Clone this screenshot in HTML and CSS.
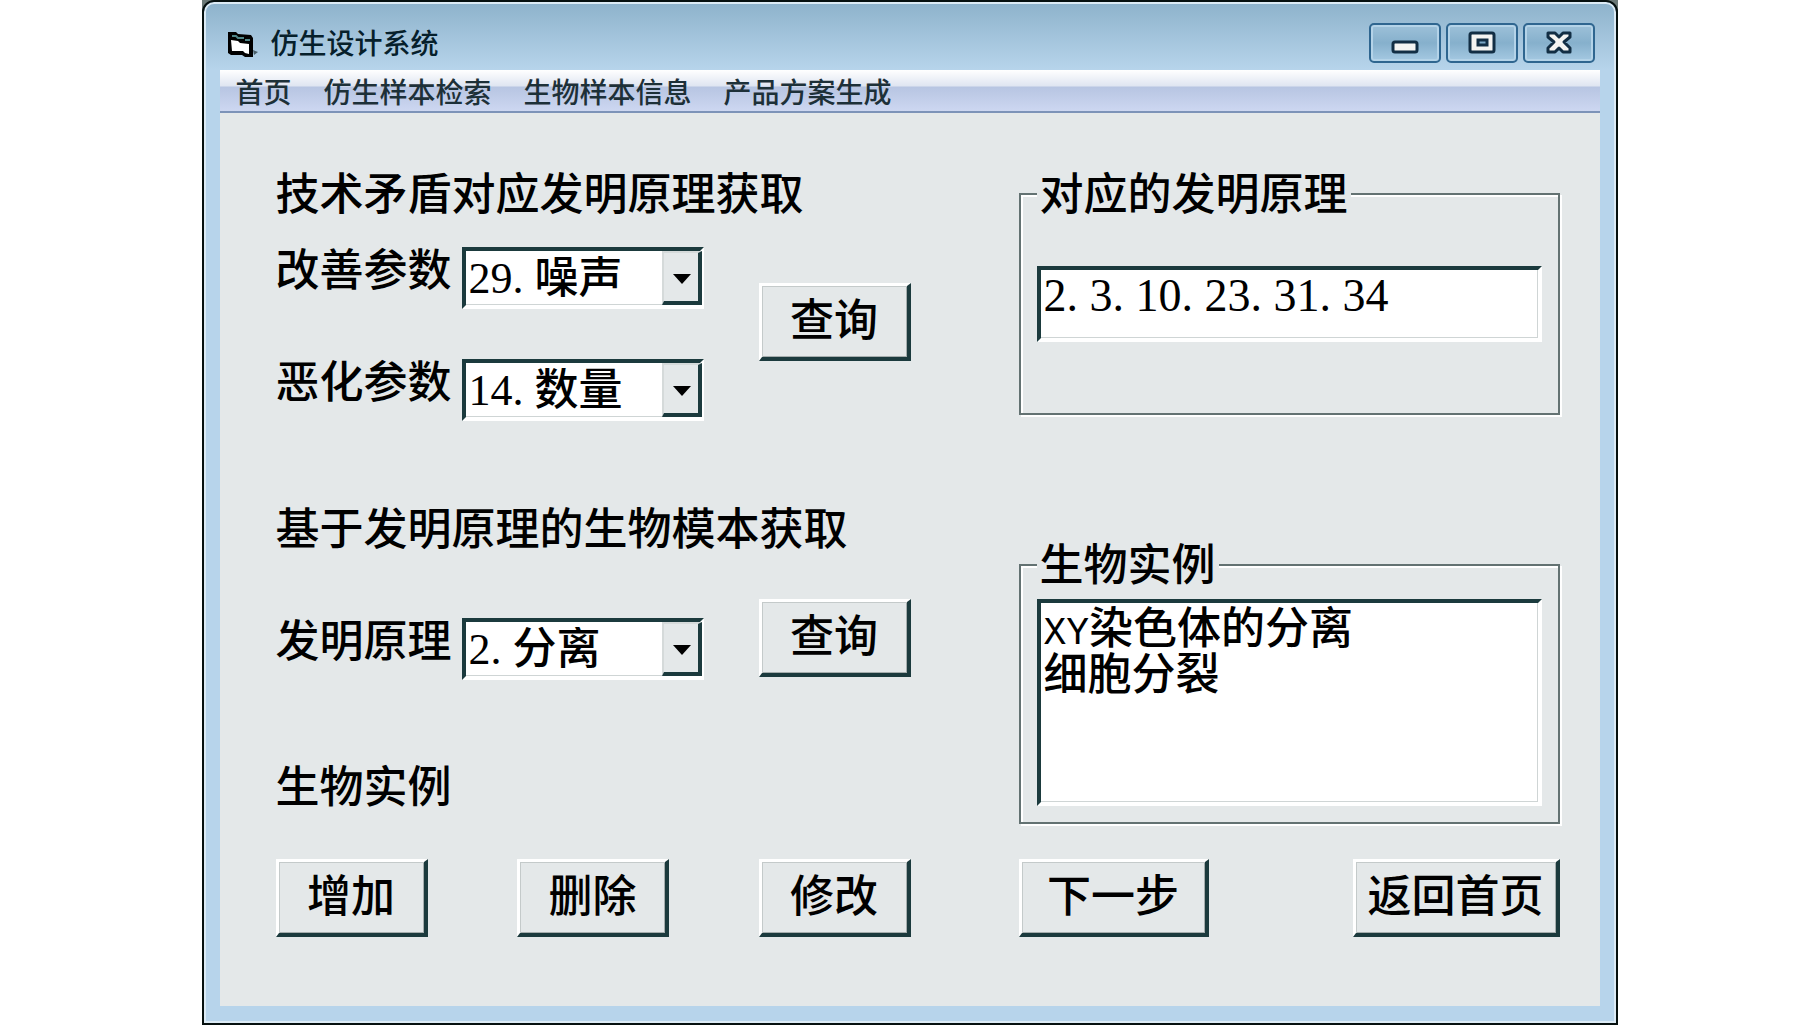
FILE: index.html
```html
<!DOCTYPE html>
<html lang="zh-CN">
<head>
    <meta charset="UTF-8">
    <meta name="viewport" content="width=device-width, initial-scale=1.0">
    <title>仿生设计系统</title>
    <link rel="stylesheet" href="styles.css">
</head>
<body>
    <div class="desktop">
        <div class="window">
            <header class="title-bar">
                <svg class="app-icon" width="32" height="30" viewBox="0 0 32 30">
                    <path d="M1 2 L9 2 L11 4 L24 5 L26 8 L26 27 L18 27 L15 25 L4 25 L1 23 Z" fill="#000"/>
                    <path d="M4 10 L11 11 L13 13 L22 14 L22 24 L18 23 L16 21 L5 21 Z" fill="#fff"/>
                    <path d="M5 6 L9 6 L11 8 L17 8 M18 10 L23 10" stroke="#4f8587" stroke-width="2" fill="none"/>
                    <path d="M26 20 L31 22 L27 25 Z" fill="#4a5f69"/>
                </svg>
                <h1 class="title">仿生设计系统</h1>
                <div class="window-buttons">
                    <button type="button" class="window-button" aria-label="最小化">
                        <svg width="28" height="24" viewBox="0 0 28 24">
                            <rect x="2" y="11" width="24" height="10" rx="2" fill="#f4f4f2" stroke="#122e44" stroke-width="3"/>
                        </svg>
                    </button>
                    <button type="button" class="window-button" aria-label="最大化">
                        <svg width="28" height="24" viewBox="0 0 28 24">
                            <rect x="2" y="2" width="24" height="19" rx="2" fill="#f4f4f2" stroke="#122e44" stroke-width="3"/>
                            <rect x="10" y="9" width="9" height="5" fill="#7ba7c6" stroke="#122e44" stroke-width="3"/>
                        </svg>
                    </button>
                    <button type="button" class="window-button" aria-label="关闭">
                        <svg width="28" height="24" viewBox="0 0 28 24">
                            <path d="M3 2 H10 L14 6 L18 2 H25 V6 L19 11 L25 17 V21 H18 L14 17 L10 21 H3 V17 L9 11 L3 6 Z" fill="#f4f4f2" stroke="#122e44" stroke-width="3" stroke-linejoin="round"/>
                        </svg>
                    </button>
                </div>
            </header>

            <nav class="menu">
                <a href="#">首页</a>
                <a href="#">仿生样本检索</a>
                <a href="#">生物样本信息</a>
                <a href="#">产品方案生成</a>
            </nav>

            <main class="form">
                <div class="left">
                    <h2>技术矛盾对应发明原理获取</h2>
                    <div class="query">
                        <div class="params">
                            <div class="param">
                                <label for="improve">改善参数</label>
                                <div class="combo">
                                    <select id="improve"><option>29. 噪声</option></select>
                                </div>
                            </div>
                            <div class="param">
                                <label for="worsen">恶化参数</label>
                                <div class="combo">
                                    <select id="worsen"><option>14. 数量</option></select>
                                </div>
                            </div>
                        </div>
                        <button type="button" class="button query-button">查询</button>
                    </div>

                    <h2 class="second">基于发明原理的生物模本获取</h2>
                    <div class="query second-query">
                        <div class="param">
                            <label for="principle">发明原理</label>
                            <div class="combo">
                                <select id="principle"><option>2. 分离</option></select>
                            </div>
                        </div>
                        <button type="button" class="button">查询</button>
                    </div>

                    <h2 class="examples">生物实例</h2>
                </div>

                <div class="right">
                    <fieldset class="principles">
                        <legend id="principles-label">对应的发明原理</legend>
                        <input type="text" value="2. 3. 10. 23. 31. 34" aria-labelledby="principles-label">
                    </fieldset>
                    <fieldset class="results">
                        <legend id="results-label">生物实例</legend>
                        <ul class="list-box" role="listbox" aria-labelledby="results-label">
                            <li role="option"><span class="latin">XY</span>染色体的分离</li>
                            <li role="option">细胞分裂</li>
                        </ul>
                    </fieldset>
                </div>

                <div class="actions">
                    <button type="button" class="button">增加</button>
                    <button type="button" class="button">删除</button>
                    <button type="button" class="button">修改</button>
                </div>
                <div class="actions">
                    <button type="button" class="button next">下一步</button>
                    <button type="button" class="button home">返回首页</button>
                </div>
            </main>
        </div>
    </div>
</body>
</html>
```
FILE: styles.css
```css
*,
*::before,
*::after {
    box-sizing: border-box;
}

body {
    margin: 0;
    background-color: #fff;
    color: #000;
    font-family: "Liberation Serif", "Noto Sans CJK SC", serif;
    font-size: 44px;
    font-weight: 500;
    line-height: 44px;
}

.desktop {
    max-width: 1416px;
    margin: 0 auto;
    background-color: #6b7977;
}

.window {
    padding: 0 16px 17px;
    border: 2px solid #06100f;
    border-radius: 12px 12px 0 0;
    background: linear-gradient(#8db2cb, #b7d4eb 68px);
    box-shadow: inset 0 0 0 2px #dcebf5;
}

/* title bar */
.title-bar {
    display: flex;
    align-items: center;
    height: 68px;
    padding: 18px 5px 0 7px;
}

.app-icon {
    margin-right: 12px;
}

.title {
    margin: 0;
    color: #06202b;
    font-size: 28px;
    font-weight: 500;
}

.window-buttons {
    display: flex;
    gap: 5px;
    align-self: flex-start;
    margin: 3px 0 0 auto;
}

.window-button {
    display: flex;
    align-items: center;
    justify-content: center;
    width: 72px;
    height: 40px;
    padding: 0;
    border: 2px solid #2f6690;
    border-radius: 5px;
    background: linear-gradient(#9dc1d9, #86b0cc 50%, #a5c9e2);
    box-shadow: inset 0 0 0 2px #b4d3e8;
}

/* menu */
.menu {
    display: flex;
    gap: 32px;
    height: 43px;
    padding-left: 16px;
    border-bottom: 2px solid #7d93b8;
    background: linear-gradient(#fff, #dfe5f1 16px, #b7c5e2 17px, #cdd7f1);
    font-size: 28px;
    line-height: 48px;
}

.menu a {
    color: #1d3038;
    text-decoration: none;
    white-space: nowrap;
}

/* form */
.form {
    display: grid;
    grid-template-columns: 635fr 541fr;
    column-gap: 108px;
    row-gap: 35px;
    padding: 58px 40px 69px 56px;
    background-color: #e4e8e9;
}

h2,
label {
    display: block;
    margin: 0;
    font-size: 44px;
    font-weight: 500;
    line-height: 50px;
    white-space: nowrap;
}

.query {
    display: flex;
    justify-content: space-between;
    align-items: flex-start;
    margin-top: 26px;
}

.params {
    display: grid;
    gap: 50px;
}

.param {
    display: flex;
    align-items: flex-start;
    gap: 10px;
}

.query-button {
    margin-top: 36px;
}

.second {
    margin-top: 85px;
}

.second-query {
    margin-top: 43px;
}

.second-query .param {
    margin-top: 19px;
}

.examples {
    margin-top: 84px;
}

select,
input,
.list-box {
    display: block;
    width: 100%;
    margin: 0;
    padding: 0 3px;
    border: 4px solid;
    border-color: #1b3a3d #fff #fff #1b3a3d;
    border-radius: 0;
    background-color: #fff;
    box-shadow: inset -1px -1px 0 #cfd5d5;
    color: #000;
    font-family: inherit;
    font-size: 44px;
    font-weight: inherit;
    line-height: 45px;
    outline: none;
}

.combo {
    position: relative;
    width: 242px;
}

select {
    height: 62px;
    appearance: none;
}

/* drop-down arrow */
.combo::before {
    content: "";
    position: absolute;
    top: 4px;
    right: 2px;
    width: 40px;
    height: 54px;
    border: 2px solid;
    border-width: 2px 4px 4px 2px;
    border-color: #d5dada #1b3a3d #1b3a3d #d5dada;
    background-color: #e4e8e9;
    pointer-events: none;
}

.combo::after {
    content: "";
    position: absolute;
    top: 27px;
    right: 13px;
    border: 9px solid transparent;
    border-top: 10px solid #000;
    border-bottom: 0;
    pointer-events: none;
}

.button {
    width: 152px;
    height: 78px;
    padding: 0;
    border: 3px solid;
    border-width: 3px 4px 4px 3px;
    border-color: #fff #1b3a3d #1b3a3d #fff;
    background-color: #e4e8e9;
    box-shadow: inset 1px 1px 0 #c4caca, inset -1px -1px 0 #a5adad;
    color: #000;
    font-family: inherit;
    font-size: 44px;
    font-weight: inherit;
    line-height: 44px;
    white-space: nowrap;
}

/* group boxes */
fieldset {
    min-width: 0;
    margin: 0;
    padding: 0 16px;
    border: 2px solid #637272;
    box-shadow: 2px 2px 0 #fff, inset 2px 2px 0 #fff;
}

legend {
    padding: 4px 3px 0;
    background-color: #e4e8e9;
    line-height: 42px;
}

.principles {
    height: 244px;
}

.principles input {
    height: 76px;
    margin-top: 49px;
    padding-bottom: 18px;
    font-size: 46px;
}

.results {
    height: 282px;
    margin-top: 127px;
}

.list-box {
    height: 207px;
    margin-top: 11px;
    padding-top: 4px;
    list-style: none;
}

.list-box .latin {
    font-family: "Liberation Mono", monospace;
    font-size: 38px;
    line-height: 1;
}

.actions {
    display: flex;
    justify-content: space-between;
}

.next {
    width: 190px;
}

.home {
    width: 207px;
}
```
